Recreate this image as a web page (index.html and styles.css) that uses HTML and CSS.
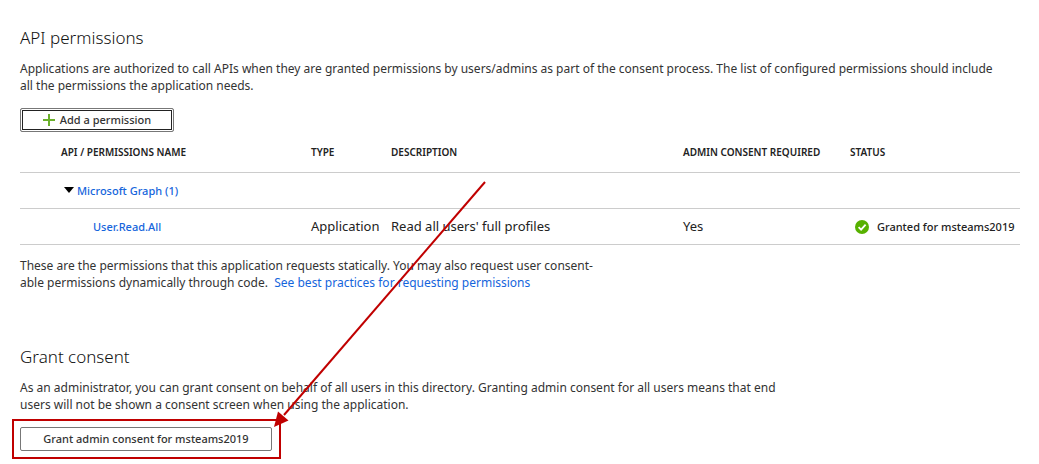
FILE: index.html
```html
<!DOCTYPE html>
<html lang="en">
<head>
<meta charset="utf-8">
<title>API permissions</title>
<link rel="stylesheet" href="styles.css">
</head>
<body>
<main class="page">
  <section class="section">
    <h1 class="title">API permissions</h1>
    <p class="text">Applications are authorized to call APIs when they are granted permissions by users/admins as part of the consent process. The list of configured permissions should include<br>all the permissions the application needs.</p>
    <button class="button button-add" type="button">
      <svg class="plus" viewBox="0 0 12 12" aria-hidden="true"><path d="M6 0v12M0 6h12" stroke="#6bb02c" stroke-width="2"/></svg>
      Add a permission
    </button>
    <table class="table">
      <colgroup><col class="col-name"><col class="col-type"><col class="col-desc"><col class="col-consent"><col class="col-status"></colgroup>
      <thead>
        <tr><th class="indent">API / PERMISSIONS NAME</th><th>TYPE</th><th>DESCRIPTION</th><th>ADMIN CONSENT REQUIRED</th><th>STATUS</th></tr>
      </thead>
      <tbody>
        <tr>
          <td class="group" colspan="5"><svg class="caret" viewBox="0 0 10 6" aria-hidden="true"><path d="M0 0h10L5 6z"/></svg><a class="link strong" href="#graph">Microsoft Graph (1)</a></td>
        </tr>
        <tr>
          <td class="child"><a class="link strong" href="#user-read-all">User.Read.All</a></td>
          <td class="value">Application</td>
          <td class="value">Read all users' full profiles</td>
          <td class="value">Yes</td>
          <td><span class="status strong"><svg class="check" viewBox="0 0 14 14" aria-hidden="true"><circle cx="7" cy="7" r="7" fill="#57b100"/><path d="M3.6 7.1l2.5 2.5 4.5-4.9" fill="none" stroke="#fff" stroke-width="1.8"/></svg>Granted for msteams2019</span></td>
        </tr>
      </tbody>
    </table>
    <p class="text note">These are the permissions that this application requests statically. You may also request user consent-<br>able permissions dynamically through code. &nbsp;<a class="link" href="#best-practices">See best practices for requesting permissions</a></p>
  </section>
  <section class="section">
    <h2 class="title">Grant consent</h2>
    <p class="text">As an administrator, you can grant consent on behalf of all users in this directory. Granting admin consent for all users means that end<br>users will not be shown a consent screen when using the application.</p>
    <div class="marked">
      <button class="button button-grant" type="button">Grant admin consent for msteams2019</button>
      <svg class="arrow" viewBox="0 0 212 246" aria-hidden="true"><path d="M211 1L10 234" stroke="#c00000" stroke-width="2"/><path d="M0 246L4 230.500L14.500 239.500z" fill="#c00000"/></svg>
    </div>
  </section>
</main>
</body>
</html>
```
FILE: styles.css
```css
body {
  margin: 0;
  background: #fff;
  color: #333;
  font: 12px/17px "Noto Sans", "Open Sans", sans-serif;
}

.page {
  display: flex;
  flex-direction: column;
  gap: 54px;
  padding: 26px 19px 12px 20px;
}

.title {
  margin: 0 0 10px;
  font-size: 17px;
  line-height: 24px;
  font-weight: 300;
  color: #111;
}

.text {
  margin: 0 0 14px;
  white-space: nowrap;
}

.note {
  margin: 12px 0 0;
}

.link {
  color: #1565dc;
  text-decoration: none;
}

.strong {
  font-size: 11px;
  font-weight: 500;
}

.button {
  display: flex;
  align-items: center;
  justify-content: center;
  box-sizing: border-box;
  height: 24px;
  padding: 0;
  background: #fff;
  border: 1px solid #777;
  border-radius: 2px;
  color: #333;
  font: 500 11px/16px "Noto Sans", "Open Sans", sans-serif;
  white-space: nowrap;
}

.button-add {
  width: 154px;
  gap: 5px;
  box-shadow: inset 0 0 0 1px #fff, inset 0 0 0 2px #222;
}

.button-grant {
  width: 252px;
}

.plus {
  width: 12px;
  height: 12px;
}

.table {
  width: 100%;
  border-collapse: collapse;
  table-layout: fixed;
  color: #222;
}

.col-name { width: 291px; }
.col-type { width: 80px; }
.col-desc { width: 292px; }
.col-consent { width: 167px; }

.table th,
.table td {
  height: 35px;
  padding: 0;
  border-bottom: 1px solid #ccc;
  text-align: left;
  white-space: nowrap;
}

.table th {
  height: 40px;
  font-size: 10px;
  font-weight: 600;
}

.table .indent { padding-left: 41px; }
.table .group { padding-left: 44px; }
.table .child { padding-left: 73px; }
.table .value { font-size: 13px; }

.caret {
  width: 10px;
  height: 6px;
  margin-right: 3px;
  vertical-align: 2px;
}

.status {
  display: flex;
  align-items: center;
  gap: 8px;
  padding-left: 5px;
}

.check {
  flex: none;
  width: 14px;
  height: 14px;
}

.marked {
  position: relative;
  width: max-content;
}

.marked::before {
  content: "";
  position: absolute;
  inset: -8px -9px -8px -8px;
  border: 2px solid #c00000;
  pointer-events: none;
}

.arrow {
  position: absolute;
  left: 254px;
  bottom: 24px;
  width: 212px;
  height: 246px;
  pointer-events: none;
}
```
